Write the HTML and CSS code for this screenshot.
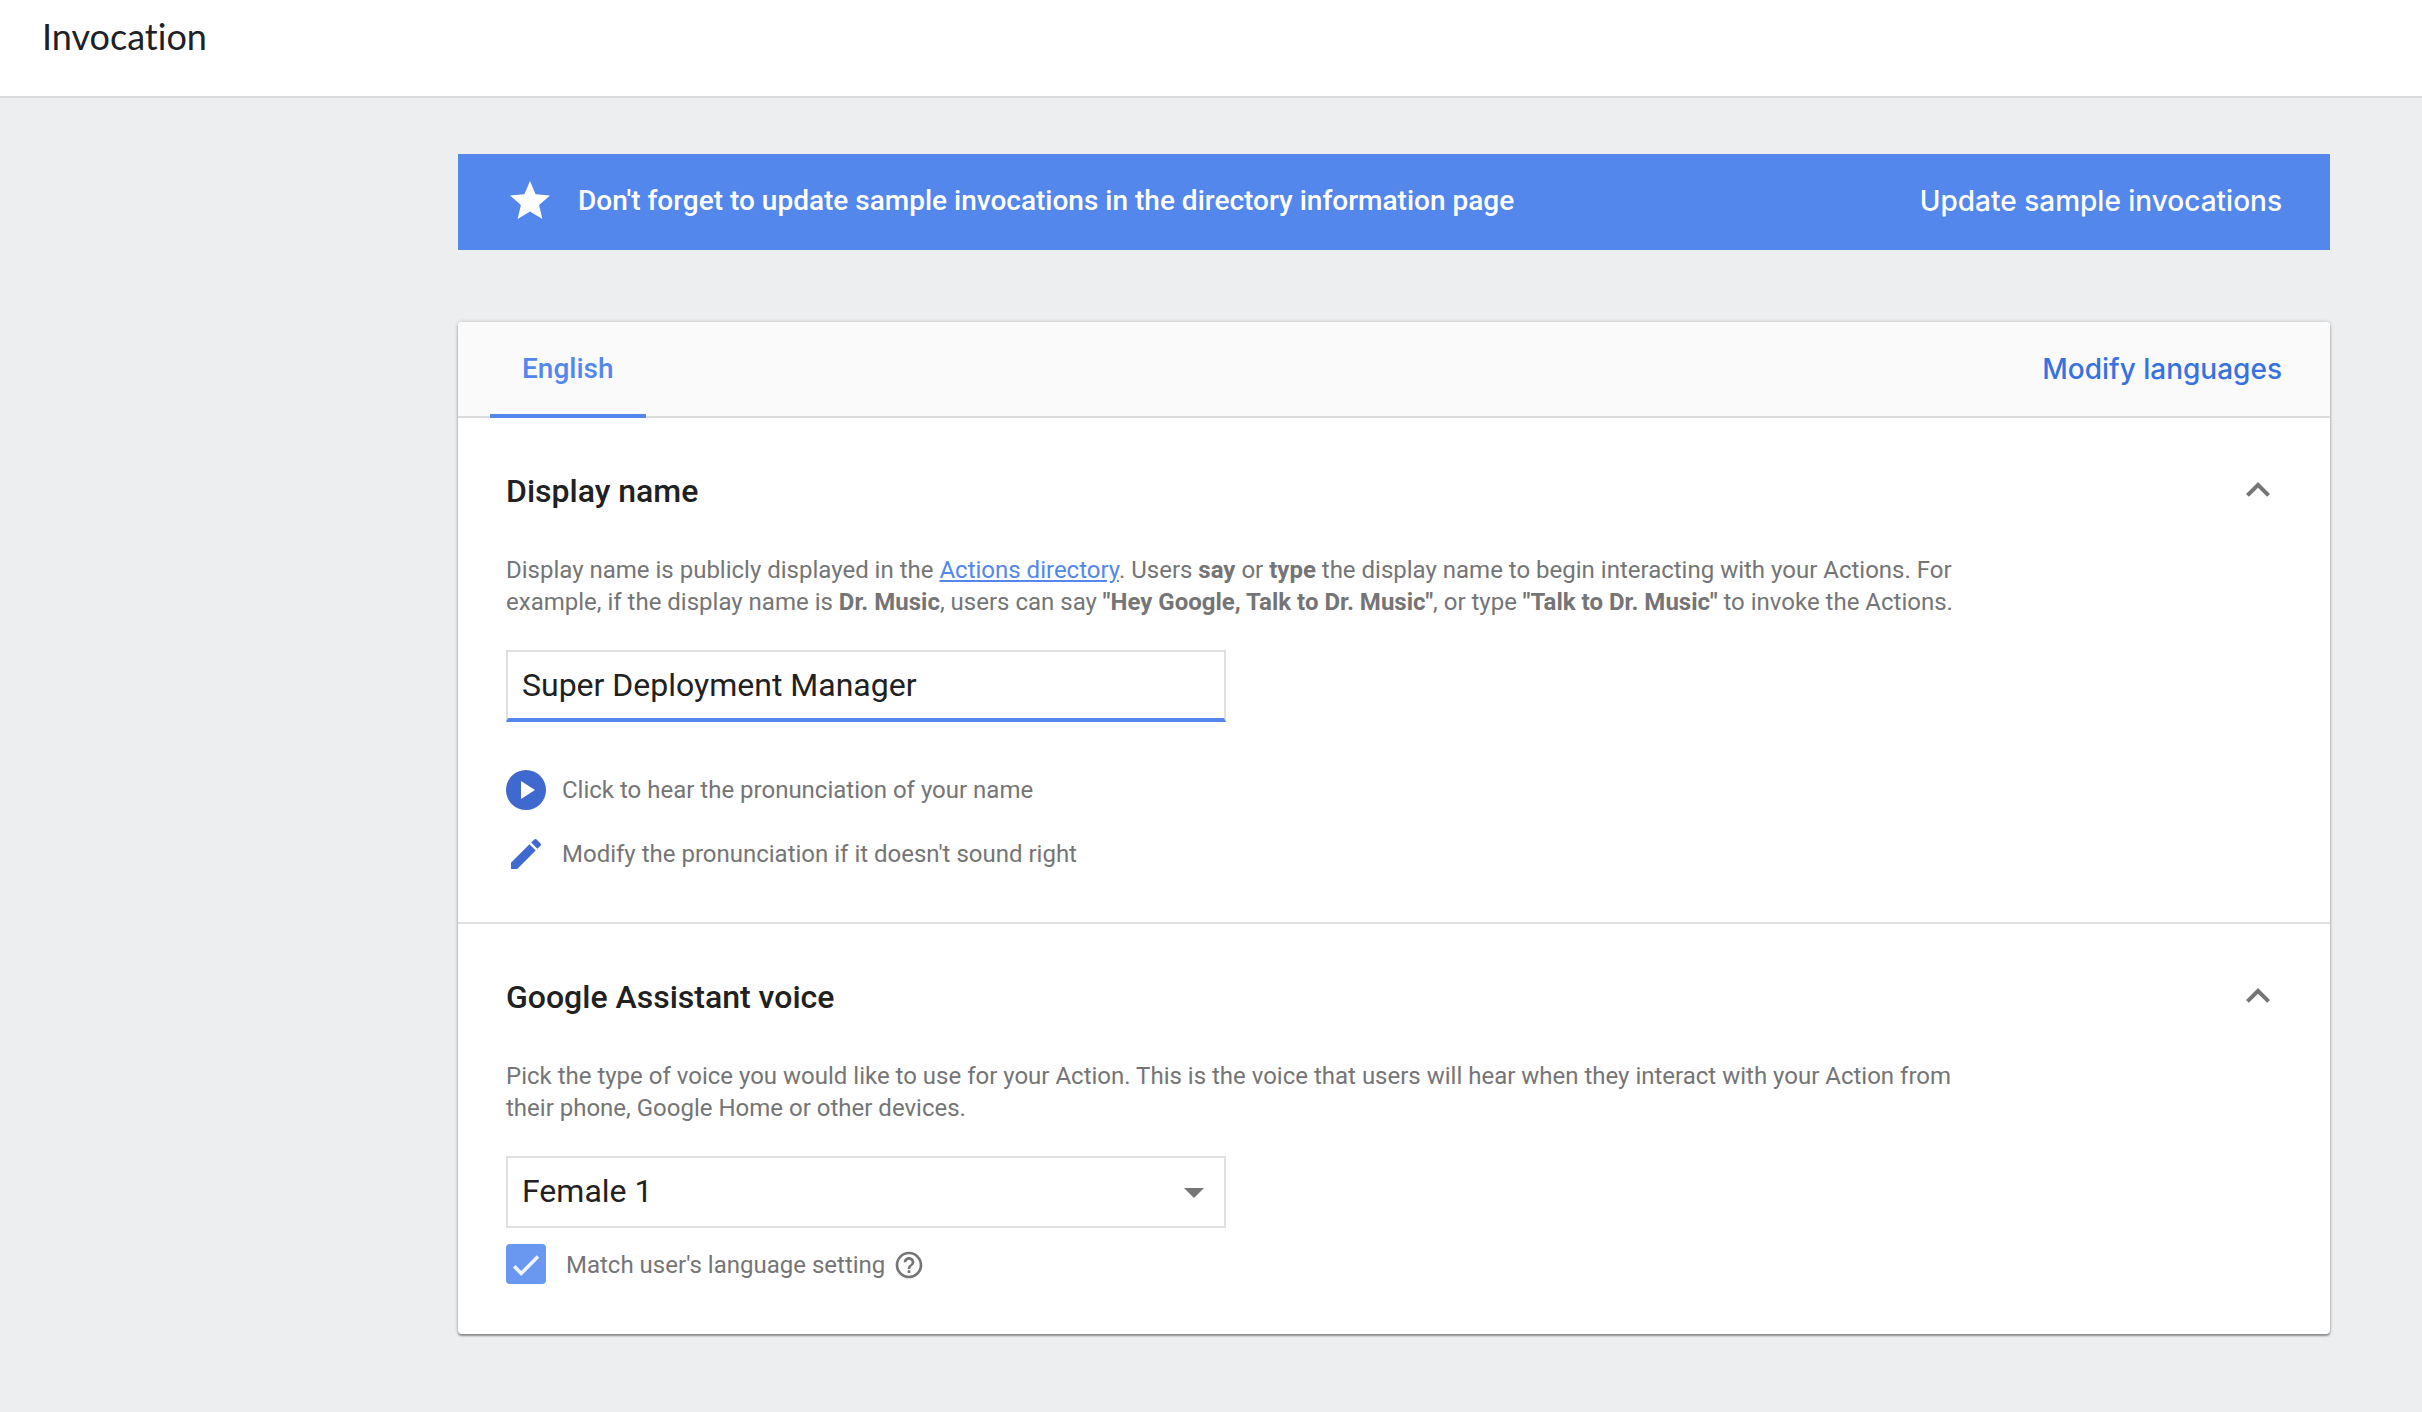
FILE: index.html
```html
<!DOCTYPE html>
<html lang="en">
<head>
<meta charset="utf-8">
<meta name="viewport" content="width=device-width, initial-scale=1">
<title>Invocation</title>
<link rel="stylesheet" href="styles.css">
</head>
<body>
<header class="page-header">
  <h1 class="page-title">Invocation</h1>
</header>
<main class="content">
  <div class="banner">
    <svg class="banner-icon" viewBox="0 0 24 24" aria-hidden="true"><path d="M12 17.27L18.18 21l-1.64-7.03L22 9.24l-7.19-.61L12 2 9.19 8.63 2 9.24l5.46 4.73L5.82 21z"/></svg>
    <p class="banner-text">Don't forget to update sample invocations in the directory information page</p>
    <button type="button" class="text-button text-button-light">Update sample invocations</button>
  </div>

  <div class="card">
    <div class="card-header">
      <div role="tablist"><button type="button" class="tab" role="tab" aria-selected="true">English</button></div>
      <button type="button" class="text-button">Modify languages</button>
    </div>

    <section class="section">
      <div class="section-header">
        <h2 class="section-title">Display name</h2>
        <button type="button" class="collapse" aria-label="Collapse display name"><svg class="collapse-icon" viewBox="0 0 24 24" aria-hidden="true"><path d="M12 8l-6 6 1.41 1.41L12 10.83l4.59 4.58L18 14z"/></svg></button>
      </div>
      <p class="description">Display name is publicly displayed in the <a href="#directory">Actions directory</a>. Users <b>say</b> or <b>type</b> the display name to begin interacting with your Actions. For example, if the display name is <b>Dr. Music</b>, users can say <b>"Hey Google, Talk to Dr. Music"</b>, or type <b>"Talk to Dr. Music"</b> to invoke the Actions.</p>
      <input class="field field-focused" type="text" aria-label="Display name" value="Super Deployment Manager">
      <div class="actions">
        <button type="button" class="action"><svg class="action-icon" viewBox="0 0 40 40" aria-hidden="true"><path d="M20 0a20 20 0 1 0 0 40 20 20 0 1 0 0-40zM15 11l14 9-14 9z" fill-rule="evenodd"/></svg>Click to hear the pronunciation of your name</button>
        <button type="button" class="action"><svg class="action-icon" viewBox="0 0 24 24" aria-hidden="true"><path d="M3 17.25V21h3.75L17.81 9.94l-3.75-3.75L3 17.25zM20.71 7.04a1 1 0 0 0 0-1.41l-2.34-2.34a1 1 0 0 0-1.41 0l-1.83 1.83 3.75 3.75 1.83-1.83z"/></svg>Modify the pronunciation if it doesn't sound right</button>
      </div>
    </section>

    <section class="section">
      <div class="section-header">
        <h2 class="section-title">Google Assistant voice</h2>
        <button type="button" class="collapse" aria-label="Collapse voice"><svg class="collapse-icon" viewBox="0 0 24 24" aria-hidden="true"><path d="M12 8l-6 6 1.41 1.41L12 10.83l4.59 4.58L18 14z"/></svg></button>
      </div>
      <p class="description">Pick the type of voice you would like to use for your Action. This is the voice that users will hear when they interact with your Action from their phone, Google Home or other devices.</p>
      <div class="select-wrap">
        <select class="field" aria-label="Voice"><option>Female 1</option></select>
        <svg class="select-arrow" viewBox="0 0 20 10" aria-hidden="true"><path d="M0 0h20L10 10z"/></svg>
      </div>
      <div class="check-row">
        <span class="checkbox-wrap">
          <input class="checkbox" type="checkbox" id="match" checked>
          <svg class="check-mark" viewBox="0 0 40 40" aria-hidden="true"><path d="M8.200 22.300l7 7.200L32 12.500" fill="none" stroke="#f0f4fd" stroke-width="3.500"/></svg>
        </span>
        <label for="match">Match user's language setting</label>
        <svg class="help-icon" viewBox="0 0 24 24" aria-hidden="true"><path d="M11 18h2v-2h-2v2zm1-16C6.48 2 2 6.48 2 12s4.48 10 10 10 10-4.48 10-10S17.52 2 12 2zm0 18c-4.41 0-8-3.59-8-8s3.59-8 8-8 8 3.59 8 8-3.59 8-8 8zm0-14c-2.21 0-4 1.79-4 4h2c0-1.100.9-2 2-2s2 .9 2 2c0 2-3 1.750-3 5h2c0-2.250 3-2.500 3-5 0-2.210-1.790-4-4-4z"/></svg>
      </div>
    </section>
  </div>
</main>
</body>
</html>
```

FILE: styles.css
```css
* { box-sizing: border-box; }

body {
  margin: 0;
  background: #eceef0;
  color: #757575;
  font: 24px/32px Roboto, sans-serif;
}

h1, h2, p { margin: 0; }

button {
  padding: 0;
  border: 0;
  background: none;
  color: inherit;
  font: inherit;
  cursor: pointer;
}

.page-header {
  min-height: 98px;
  padding: 14px 42px;
  border-bottom: 2px solid #d8dbde;
  background: #fff;
}

.page-title {
  color: #202124;
  font: 400 36px/44px Lato, sans-serif;
  font-variant-ligatures: none;
}

.content {
  display: flex;
  flex-direction: column;
  gap: 72px;
  padding: 56px 92px 76px 458px;
}

.banner {
  display: flex;
  align-items: center;
  min-height: 96px;
  padding: 0 48px 2px;
  background: #5387ec;
  color: #fff;
}

.banner-icon {
  width: 48px;
  height: 48px;
  margin-right: 24px;
  fill: currentColor;
}

.banner-text {
  flex: 1;
  font-size: 28px;
  font-weight: 500;
}

.text-button {
  color: #3871e0;
  font: 500 28px/32px Inter, sans-serif;
}

.text-button-light { color: #fff; }

.card {
  border-radius: 4px;
  background: #fff;
  box-shadow: 0 2px 2px rgba(0, 0, 0, .36), 0 0 4px rgba(0, 0, 0, .2);
}

.card-header {
  display: flex;
  align-items: center;
  justify-content: space-between;
  height: 96px;
  padding: 0 48px 0 32px;
  border-bottom: 2px solid #dcdcdc;
  border-radius: 4px 4px 0 0;
  background: #fafafa;
}

.tab {
  height: 96px;
  margin-bottom: -2px;
  padding: 2px 32px 0;
  border-bottom: 4px solid #5387ec;
  color: #5387ec;
  font-size: 28px;
  font-weight: 500;
}

.section {
  padding: 48px;
}

.section + .section { border-top: 2px solid #e0e0e0; }

.section-header {
  display: flex;
  align-items: center;
  justify-content: space-between;
  height: 48px;
  margin-bottom: 40px;
}

.section-title {
  padding-top: 2px;
  color: #212121;
  font-size: 32px;
  font-weight: 500;
  line-height: 40px;
}

.collapse { height: 48px; }

.collapse-icon {
  display: block;
  width: 48px;
  height: 48px;
  fill: #757575;
}

.description {
  max-width: 1456px;
  margin-bottom: 32px;
}

.description a { color: #5387ec; }

.field {
  display: block;
  width: 720px;
  max-width: 100%;
  height: 72px;
  padding: 0 14px;
  border: 2px solid #e0e0e0;
  border-radius: 0;
  outline: 0;
  background: #fff;
  color: #212121;
  font: 400 32px/40px Roboto, sans-serif;
  appearance: none;
}

.field-focused { border-bottom: 4px solid #5387ec; }

.actions {
  display: flex;
  flex-direction: column;
  align-items: flex-start;
  gap: 24px;
  padding-top: 48px;
}

.action {
  display: flex;
  align-items: center;
  gap: 16px;
}

.action-icon {
  width: 40px;
  height: 40px;
  fill: #4069d0;
}

.select-wrap {
  position: relative;
  width: 720px;
  max-width: 100%;
}

.select-wrap .field { padding-bottom: 2px; }

.select-arrow {
  position: absolute;
  top: 32px;
  right: 22px;
  width: 20px;
  height: 10px;
  fill: #757575;
  pointer-events: none;
}

.check-row {
  display: flex;
  align-items: center;
  min-height: 58px;
  padding-top: 16px;
}

.checkbox-wrap {
  position: relative;
  align-self: flex-start;
  height: 40px;
  margin-right: 20px;
}

.checkbox {
  display: block;
  width: 40px;
  height: 40px;
  margin: 0;
  border-radius: 4px;
  background: #6a98f0;
  appearance: none;
}

.check-mark {
  position: absolute;
  inset: 0;
  pointer-events: none;
}

.help-icon {
  width: 32px;
  height: 32px;
  margin-left: 8px;
  fill: #757575;
}
```
